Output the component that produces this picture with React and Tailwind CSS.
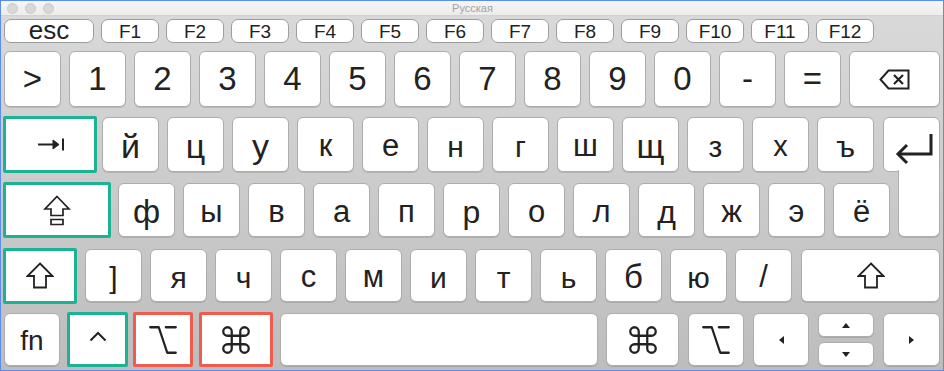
import { Command, Option } from 'lucide-react'

const base = 'flex items-center justify-center bg-white shrink-0 text-[#222]'
const plain = `${base} rounded-[6px] border border-[#adadad] shadow-[0_1px_0_rgba(0,0,0,0.12)]`
const teal = `${base} rounded-[2px] border-[3px] border-[#1cb394]`
const red = `${base} rounded-[2px] border-[3px] border-[#ef5b4c]`

const BackspaceIcon = () => (
	<svg width="31" height="21" viewBox="0 0 31 21" fill="none" stroke="#222" strokeWidth="2">
		<path d="M9.5 1.5H29.5V19.5H9.5L1.5 10.5Z" strokeLinejoin="miter" />
		<path d="M15 6L24 15M24 6L15 15" strokeWidth="2.2" />
	</svg>
)

const TabIcon = () => (
	<svg width="29" height="13" viewBox="0 0 29 13" fill="none" stroke="#222" strokeWidth="2">
		<path d="M1 6.5H18" />
		<path d="M16 2L22 6.5L16 11Z" fill="#222" strokeWidth="1" />
		<path d="M26 0.5V12.5" />
	</svg>
)

const CapsIcon = () => (
	<svg width="28" height="31" viewBox="0 0 28 31" fill="none" stroke="#222" strokeWidth="1.7">
		<path d="M14 1.5L26 14H20V20.5H8V14H2Z" strokeLinejoin="miter" />
		<path d="M8 24.5H20V29.5H8Z" />
	</svg>
)

const ShiftIcon = () => (
	<svg width="28" height="27" viewBox="0 0 28 27" fill="none" stroke="#222" strokeWidth="1.8">
		<path d="M14 1.5L26.5 14H20V25.5H8V14H1.5Z" strokeLinejoin="miter" />
	</svg>
)

const EnterIcon = () => (
	<svg width="40" height="32" viewBox="0 0 40 32" fill="none" stroke="#222" strokeWidth="3">
		<path d="M37 1V21H5" />
		<path d="M13 12L4 21L13 30" />
	</svg>
)

const CaretIcon = () => (
	<svg width="18" height="11" viewBox="0 0 18 11" fill="none" stroke="#222" strokeWidth="2">
		<path d="M1.5 9.5L9 2L16.5 9.5" />
	</svg>
)

const Tri = ({ dir }) => {
	const d = {
		left: 'M5 0L0 4L5 8Z',
		right: 'M0 0L5 4L0 8Z',
		up: 'M0 5L4 0L8 5Z',
		down: 'M0 0L8 0L4 5Z',
	}[dir]
	const lr = dir === 'left' || dir === 'right'
	return (
		<svg width={lr ? 5 : 8} height={lr ? 8 : 5} viewBox={lr ? '0 0 5 8' : '0 0 8 5'}>
			<path d={d} fill="#222" />
		</svg>
	)
}

const Cmd = () => <Command size={34} strokeWidth={1.6} color="#222" />
const Opt = () => <Option size={34} strokeWidth={1.6} color="#222" />

const numRow = ['>', '1', '2', '3', '4', '5', '6', '7', '8', '9', '0', '-', '=']

const row2 = [
	['й', 'text-[34px]'],
	['ц', 'text-[34px]'],
	['у', 'text-[34px]'],
	['к', 'text-[31px]'],
	['е', 'text-[31px]'],
	['н', 'text-[30px]'],
	['г', 'text-[30px]'],
	['ш', 'text-[31px]'],
	['щ', 'text-[34px]'],
	['з', 'text-[30px]'],
	['х', 'text-[29px]'],
	['ъ', 'text-[30px]'],
]

const row3 = [
	['ф', 'text-[33px]'],
	['ы', 'text-[31px]'],
	['в', 'text-[31px]'],
	['а', 'text-[31px]'],
	['п', 'text-[31px]'],
	['р', 'text-[32px]'],
	['о', 'text-[31px]'],
	['л', 'text-[31px]'],
	['д', 'text-[32px]'],
	['ж', 'text-[31px]'],
	['э', 'text-[31px]'],
	['ё', 'text-[31px]'],
]

const row4 = [
	[']', 'text-[30px]'],
	['я', 'text-[30px]'],
	['ч', 'text-[30px]'],
	['с', 'text-[31px]'],
	['м', 'text-[31px]'],
	['и', 'text-[30px]'],
	['т', 'text-[30px]'],
	['ь', 'text-[30px]'],
	['б', 'text-[33px]'],
	['ю', 'text-[30px]'],
	['/', 'text-[31px]'],
]

const fKeys = ['F1', 'F2', 'F3', 'F4', 'F5', 'F6', 'F7', 'F8', 'F9', 'F10', 'F11', 'F12']

export default function App() {
	return (
		<div
			className="w-[944px] h-[371px] border border-[#5b8def] bg-gradient-to-b from-[#dadada] to-[#bdbdbd] flex flex-col overflow-hidden"
			style={{ fontFamily: '"Liberation Sans", Arial, sans-serif' }}
		>
			{/* title bar */}
			<div className="h-[15px] shrink-0 flex items-center relative bg-gradient-to-b from-[#f6f6f6] to-[#ececec] border-b border-[#d2d2d2]">
				<div className="flex gap-[7px] pl-[6px]">
					<span className="w-[11px] h-[11px] rounded-full bg-[#d8d8d8] border border-[#cacaca]" />
					<span className="w-[11px] h-[11px] rounded-full bg-[#d8d8d8] border border-[#cacaca]" />
					<span className="w-[11px] h-[11px] rounded-full bg-[#d8d8d8] border border-[#cacaca]" />
				</div>
				<div className="flex-1 text-center text-[11px] leading-none text-[#a2a2a2] -ml-[52px]">
					Русская
				</div>
			</div>

			{/* function row */}
			<div className="flex gap-[7px] pl-[3px] mt-[3px] h-[24px]">
				<div className={`${base} w-[90px] rounded-[7px] border border-[#9d9d9d] text-[26px] leading-none pb-[2px]`}>
					esc
				</div>
				{fKeys.map((f) => (
					<div
						key={f}
						className={`${base} w-[58px] rounded-[7px] border border-[#9d9d9d] text-[19px] leading-none`}
					>
						{f}
					</div>
				))}
			</div>

			{/* number row */}
			<div className="flex gap-2 pl-[3px] mt-[8px] h-[56px]">
				{numRow.map((k) => (
					<div key={k} className={`${plain} w-[57px] text-[33px]`}>
						{k}
					</div>
				))}
				<div className={`${plain} w-[91px]`}>
					<BackspaceIcon />
				</div>
			</div>

			{/* tab row */}
			<div className="flex items-center pl-[2px] mt-[10px] h-[55px]">
				<div className={`${teal} w-[94px] h-[57px] pl-[2px]`}>
					<TabIcon />
				</div>
				<div className="flex gap-2 ml-[5px] h-full">
					{row2.map(([k, s]) => (
						<div key={k} className={`${plain} w-[57px] ${s} pt-[4px]`}>
							{k}
						</div>
					))}
				</div>
				<div
					className={`${base} ml-[9px] w-[57px] h-full rounded-t-[6px] rounded-bl-[6px] border border-[#adadad] items-start pt-[15px] pl-[5px]`}
				>
					<EnterIcon />
				</div>
			</div>

			{/* home row */}
			<div className="flex items-start pl-[2px] mt-[11px] h-[54px]">
				<div className={`${teal} w-[108px] h-[56px] -mt-px`}>
					<CapsIcon />
				</div>
				<div className="flex gap-2 ml-[7px] h-full">
					{row3.map(([k, s]) => (
						<div key={k} className={`${plain} w-[57px] ${s} pt-[4px]`}>
							{k}
						</div>
					))}
				</div>
				<div className="ml-[8px] -mt-[13px] w-[42px] h-[67px] bg-white border border-t-0 border-[#adadad] rounded-b-[6px] shadow-[0_1px_0_rgba(0,0,0,0.12)]" />
			</div>

			{/* shift row */}
			<div className="flex items-center pl-[2px] mt-[12px] h-[53px]">
				<div className={`${teal} w-[74px] h-[56px]`}>
					<ShiftIcon />
				</div>
				<div className="flex gap-2 ml-[8px] h-full">
					{row4.map(([k, s]) => (
						<div key={k} className={`${plain} w-[57px] ${s} pt-[3px]`}>
							{k}
						</div>
					))}
				</div>
				<div className={`${plain} ml-[9px] w-[139px] h-full`}>
					<ShiftIcon />
				</div>
			</div>

			{/* bottom row */}
			<div className="flex items-center pl-[3px] mt-[11px] h-[53px]">
				<div className={`${plain} w-[56px] h-full text-[28px] pt-[2px]`}>fn</div>
				<div className={`${teal} ml-[7px] w-[61px] h-[55px] pb-[6px]`}>
					<CaretIcon />
				</div>
				<div className={`${red} ml-[5px] w-[60px] h-[55px]`}>
					<Opt />
				</div>
				<div className={`${red} ml-[6px] w-[74px] h-[55px]`}>
					<Cmd />
				</div>
				<div className={`${plain} ml-[7px] w-[318px] h-full`} />
				<div className={`${plain} ml-[8px] w-[73px] h-full`}>
					<Cmd />
				</div>
				<div className={`${plain} ml-[9px] w-[56px] h-full`}>
					<Opt />
				</div>
				<div className={`${plain} ml-[9px] w-[56px] h-full`}>
					<Tri dir="left" />
				</div>
				<div className="ml-[9px] w-[56px] h-full flex flex-col gap-[5px]">
					<div className={`${plain} w-full h-[24px]`}>
						<Tri dir="up" />
					</div>
					<div className={`${plain} w-full h-[24px]`}>
						<Tri dir="down" />
					</div>
				</div>
				<div className={`${plain} ml-[9px] w-[57px] h-full`}>
					<Tri dir="right" />
				</div>
			</div>
		</div>
	)
}
